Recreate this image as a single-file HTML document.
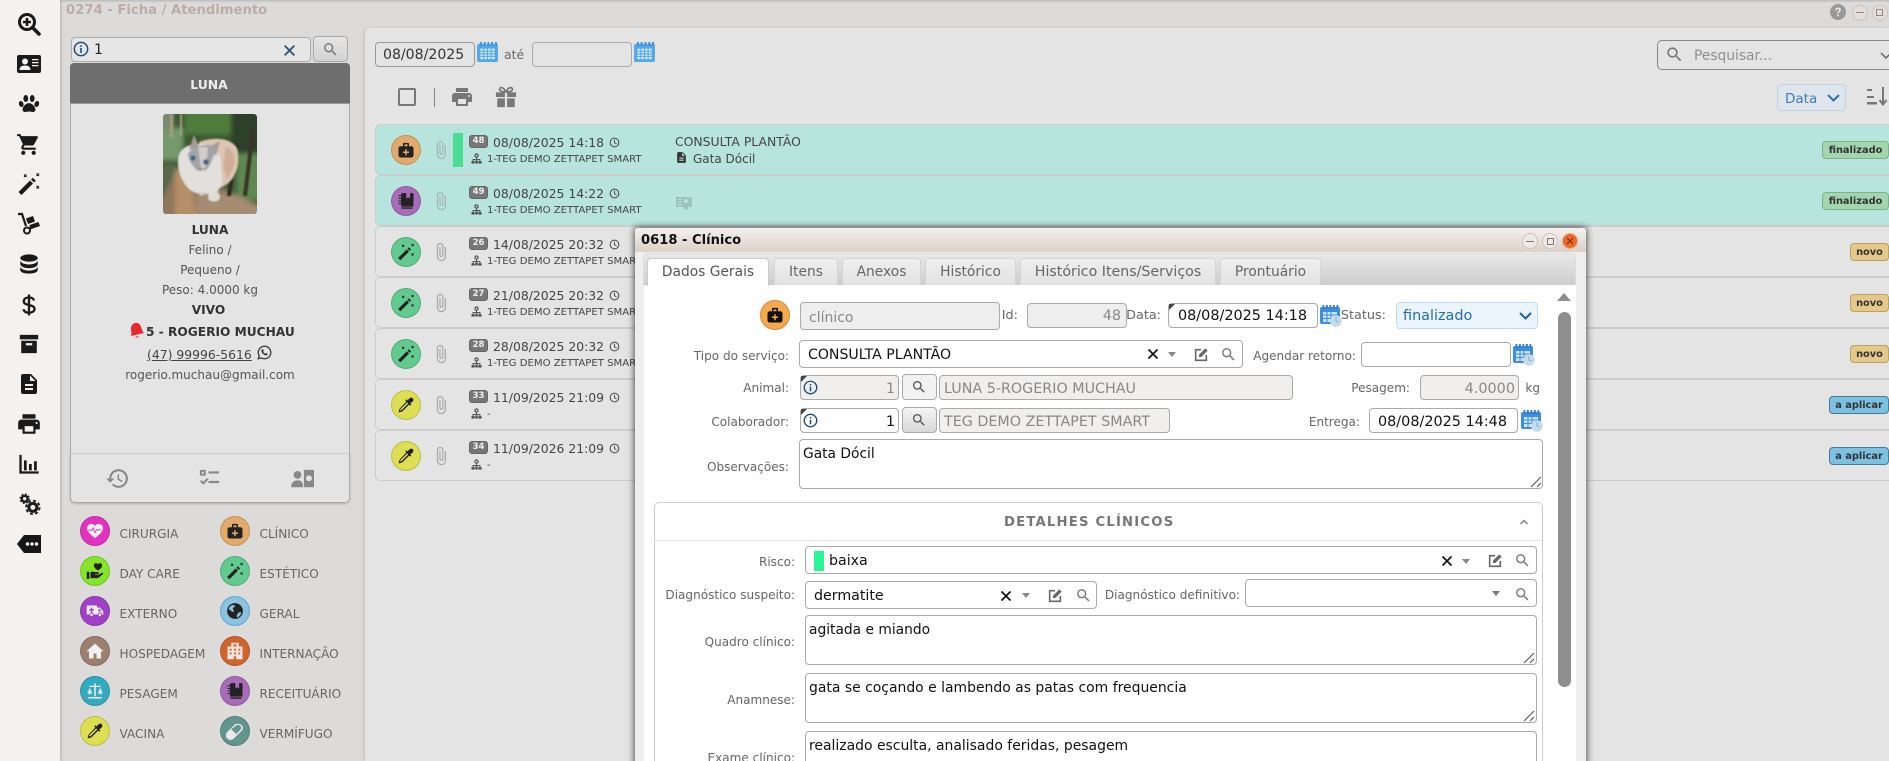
<!DOCTYPE html>
<html lang="pt"><head><meta charset="utf-8"><title>Ficha / Atendimento</title>
<style>
html{margin:0;padding:0;width:1889px;height:761px;overflow:hidden}
body{margin:0;padding:0;width:1889px;height:761px;overflow:hidden;position:relative;background:#dcdbd9;font-family:"DejaVu Sans","Liberation Sans",sans-serif;font-size:12.4px;color:#444}
div,span,svg{box-sizing:border-box}
.a{position:absolute}
.t{position:absolute;white-space:nowrap;height:16px;line-height:16px;margin-top:1px}
.r{text-align:right}
.i{position:absolute;display:block}
.in{position:absolute;background:#fff;border:1px solid #aaa;border-radius:4px}
.dis{background:#f0efee}
.lb{position:absolute;white-space:nowrap;height:16px;line-height:16px;text-align:right;color:#666;font-size:12.05px}
.v{position:absolute;white-space:nowrap;height:20px;line-height:20px;font-size:14.4px;color:#111;margin-top:1px}
.g{color:#888}
.c{position:absolute;width:30px;height:30px;border-radius:50%;border:1px solid rgba(0,0,0,.15)}
.c svg{position:absolute;left:5px;top:5px;width:18px;height:18px}
.leg{position:absolute;white-space:nowrap;height:16px;line-height:16px;font-size:12.1px;color:#666;margin-top:1px}
.row{position:absolute;left:375px;width:1520px;height:51px;background:#e4e4e4;border:1px solid #ccc;border-radius:5px}
.gr{background:#b7e4dd}
.bd{position:absolute;left:469px;width:19px;height:13px;background:#777;border:1px solid #666;border-radius:3px;color:#eee;font-weight:bold;font-size:8.5px;line-height:11px;text-align:center}
.tag{position:absolute;height:18px;border-radius:4px;line-height:18px;font-weight:bold;font-size:9.8px;color:#333;text-align:center;border:1px solid}
.fin{left:1822px;width:67px;background:#a3d6ae;border-color:#7fb28b}
.nov{left:1850px;width:39px;background:#e4c88c;border-color:#bda066}
.apl{left:1829px;width:60px;background:#7cc0e2;border-color:#4c7a90}
.tab{position:absolute;top:258px;height:27px;background:linear-gradient(#efefef,#e2e2e2);border:1px solid #d4d4d4;border-bottom:0;border-radius:4px 4px 0 0;color:#666;font-size:13.8px;line-height:26px;text-align:center}
.wb{position:absolute;width:16px;height:16px;border-radius:50%;border:1px solid #cbc4bd;background:#efeae6}
.corner{position:absolute;width:0;height:0;border-top:6px solid #444;border-right:6px solid transparent}
</style></head><body>
<svg width="0" height="0" style="position:absolute"><defs>
<symbol id="search" viewBox="0 0 24 24"><path d="M15.5 14h-.79l-.28-.27C15.41 12.59 16 11.11 16 9.5 16 5.91 13.09 3 9.5 3S3 5.91 3 9.5 5.91 16 9.5 16c1.61 0 3.09-.59 4.23-1.57l.27.28v.79l5 4.99L20.49 19l-4.99-5zm-6 0C7.01 14 5 11.99 5 9.5S7.01 5 9.5 5 14 7.01 14 9.5 11.99 14 9.5 14z"/></symbol>
<symbol id="splus" viewBox="0 0 24 24"><circle cx="10" cy="10" r="7.5" fill="none" stroke="currentColor" stroke-width="3"/><path d="M15.5 15.5 22 22" stroke="currentColor" stroke-width="3.6" stroke-linecap="round"/><path d="M10 6v8M6 10h8" stroke="currentColor" stroke-width="2.6"/></symbol>
<symbol id="idc" viewBox="0 0 24 18"><path fill-rule="evenodd" d="M2 0h20a2 2 0 0 1 2 2v14a2 2 0 0 1-2 2H2a2 2 0 0 1-2-2V2a2 2 0 0 1 2-2zM8 3.500a3 3 0 1 0 0 6 3 3 0 0 0 0-6zM2.500 15h11c0-3-2-4.500-5.500-4.500S2.500 12 2.500 15zM15 4v1.200h6.500V4zM15 7v1.200h6.500V7zM15 10v1.200h6.500V10z"/></symbol>
<symbol id="paw" viewBox="0 0 24 24"><ellipse cx="8.500" cy="6" rx="2.600" ry="3.800"/><ellipse cx="15.500" cy="6" rx="2.600" ry="3.800"/><ellipse cx="3.500" cy="12" rx="2.500" ry="3.300" transform="rotate(-20 3.500 12)"/><ellipse cx="20.500" cy="12" rx="2.500" ry="3.300" transform="rotate(20 20.500 12)"/><path d="M12 11c-3.500 0-7 4-7 7 0 3 3 3 4.500 2.500 1.500-.5 3.500-.5 5 0 1.500.5 4.500.5 4.500-2.500 0-3-3.500-7-7-7z"/></symbol>
<symbol id="cart" viewBox="0 0 24 24"><path d="M7 18c-1.100 0-1.990.9-1.990 2S5.900 22 7 22s2-.9 2-2-.9-2-2-2zM1 2v2h2l3.600 7.590-1.350 2.450c-.16.28-.25.61-.25.96 0 1.100.9 2 2 2h12v-2H7.420c-.14 0-.25-.11-.25-.25l.03-.12.9-1.630h7.450c.75 0 1.410-.41 1.750-1.030l3.580-6.490c.08-.14.12-.31.12-.48 0-.55-.45-1-1-1H5.210l-.94-2H1zm16 16c-1.100 0-1.990.9-1.990 2s.89 2 1.990 2 2-.9 2-2-.9-2-2-2z"/></symbol>
<symbol id="wand" viewBox="0 0 24 24"><path d="M1.500 20 13 8.500l3 3L4.500 23z"/><path d="M14 7.500 15.800 5.700l3 3L17 10.500z"/><path d="M7 2.500l2.500 2.500M9.500 2.500 7 5M19.500 14l2.500 2.500M22 14l-2.500 2.500M19.500 1.500 22 4M22 1.500 19.500 4" stroke="currentColor" stroke-width="1.200" fill="none"/></symbol>
<symbol id="dolly" viewBox="0 0 24 24"><path d="M1 2h4l4 12" fill="none" stroke="currentColor" stroke-width="2.200"/><circle cx="10" cy="18.500" r="3" fill="none" stroke="currentColor" stroke-width="2"/><path d="M9 6.500 16 4l2 5.500-7 2.500zM12.500 13l9-3 1.500 4-10 3.500z"/></symbol>
<symbol id="db" viewBox="0 0 24 24"><ellipse cx="12" cy="5.500" rx="9.500" ry="4"/><path d="M2.500 8.500c1 2.500 4.500 4 9.500 4s8.500-1.500 9.500-4v4c-1 2.500-4.500 4-9.500 4s-8.500-1.500-9.500-4z" /><path d="M2.500 15.200c1 2.500 4.500 4 9.500 4s8.500-1.500 9.500-4V19c-1 2.500-4.500 3.500-9.500 3.500S3.500 21.500 2.500 19z"/></symbol>
<symbol id="dollar" viewBox="0 0 24 24"><path d="M17 7.500C16.500 5.500 14.500 4.500 12 4.500c-3 0-5.200 1.300-5.200 3.700 0 5.300 10.700 2.500 10.700 7.800 0 2.300-2.300 3.700-5.500 3.700-2.800 0-5-1.200-5.500-3.500M12 1.500v21" fill="none" stroke="currentColor" stroke-width="2.300"/></symbol>
<symbol id="arch" viewBox="0 0 24 24"><path fill-rule="evenodd" d="M2 2h20v5H2zM3.500 8.500h17V22h-17zM8.500 11v2.500h7V11z"/></symbol>
<symbol id="doc" viewBox="0 0 24 24"><path d="M14 2H6c-1.100 0-1.990.9-1.990 2L4 20c0 1.100.89 2 1.990 2H18c1.100 0 2-.9 2-2V8l-6-6zm2 16H8v-2h8v2zm0-4H8v-2h8v2zm-3-5V3.500L18.500 9H13z"/></symbol>
<symbol id="print" viewBox="0 0 24 24"><path d="M19 8H5c-1.660 0-3 1.340-3 3v6h4v4h12v-4h4v-6c0-1.660-1.340-3-3-3zm-3 11H8v-5h8v5zm3-7c-.55 0-1-.45-1-1s.45-1 1-1 1 .45 1 1-.45 1-1 1zm-1-9H6v4h12V3z"/></symbol>
<symbol id="chart" viewBox="0 0 24 24"><path d="M1.500 2h2.500v18h-2.500zM1.500 20h21v2.500h-21zM6.500 8h3v11h-3zM12 12h3v7h-3zM17.500 9h3v10h-3z"/></symbol>
<symbol id="cogs" viewBox="0 0 24 24"><circle cx="7" cy="6" r="3" fill="none" stroke="currentColor" stroke-width="2.400"/><circle cx="7" cy="6" r="4.700" fill="none" stroke="currentColor" stroke-width="1.500" stroke-dasharray="2 1.700"/><circle cx="15.500" cy="15" r="4.200" fill="none" stroke="currentColor" stroke-width="3.200"/><circle cx="15.500" cy="15" r="7" fill="none" stroke="currentColor" stroke-width="2" stroke-dasharray="3 2.500"/></symbol>
<symbol id="history" viewBox="0 0 24 24"><path d="M13 3c-4.970 0-9 4.030-9 9H1l3.890 3.890.07.14L9 12H6c0-3.870 3.130-7 7-7s7 3.130 7 7-3.130 7-7 7c-1.930 0-3.680-.79-4.940-2.060l-1.420 1.420C8.270 19.990 10.510 21 13 21c4.970 0 9-4.030 9-9s-4.030-9-9-9zm-1 5v5l4.280 2.540.72-1.210-3.500-2.080V8H12z"/></symbol>
<symbol id="chk" viewBox="0 0 24 24"><path d="M2 3h6v6H2zM4 5v2h2V5zM11 4.500h11v2.300H11zM11 14.500h11v2.300H11zM2 15l1.500-1.500 2 2 4-4L11 13l-5.500 5.500z"/></symbol>
<symbol id="pcash" viewBox="0 0 26 24"><circle cx="7" cy="7.500" r="4.200"/><path d="M0 21c0-5 3-7.500 7-7.500s6 1.500 6 7.500z"/><path fill-rule="evenodd" d="M14 2h11v19H14zM19.500 8a3 3 0 1 0 0 6.500 3 3 0 0 0 0-6.500z"/></symbol>
<symbol id="med" viewBox="0 0 24 24"><path fill-rule="evenodd" d="M9 2.500h6a1 1 0 0 1 1 1V7h3a3 3 0 0 1 3 3v9a3 3 0 0 1-3 3H5a3 3 0 0 1-3-3v-9a3 3 0 0 1 3-3h3V3.500a1 1 0 0 1 1-1zM10 4.500V7h4V4.500zM11 11v3H8v2h3v3h2v-3h3v-2h-3v-3z"/></symbol>
<symbol id="heart" viewBox="0 0 24 24"><path d="M12 21.500C5 16 1.500 12.500 1.500 8.200 1.500 5 4 2.500 7 2.500c2 0 3.800 1 5 2.800 1.200-1.800 3-2.800 5-2.800 3 0 5.500 2.500 5.500 5.700 0 4.300-3.500 7.800-10.500 13.300z"/><path d="M3 11h5l1.500-3 2.500 6 2-3.500h6" fill="none" stroke="#e332c0" stroke-width="1.300"/></symbol>
<symbol id="hand" viewBox="0 0 24 24"><path d="M16 11.500c-3-2.300-5.500-4-5.500-7C10.500 2.800 11.800 1.500 13.300 1.500c1.100 0 2.100.6 2.700 1.600.6-1 1.600-1.600 2.700-1.600 1.500 0 2.800 1.300 2.800 3 0 3-2.500 4.700-5.500 7z"/><path d="M1 13h3.500v9.500H1zM6 13.500c2-1 4-1 6 0h4c1.500 0 1.500 2.500 0 2.500h-4v.8h5l4-2.300c1.500-.6 2.500 1 1.300 2L16 21.500H6z"/></symbol>
<symbol id="amb" viewBox="0 0 26 24"><path fill-rule="evenodd" d="M2 4h13a1 1 0 0 1 1 1v2h4l5 5.500V17h-2a3 3 0 0 0-6 0h-6a3 3 0 0 0-6 0H2a1 1 0 0 1-1-1V5a1 1 0 0 1 1-1zM7 7v2.500H4.500v2H7V14h2v-2.500h2.500v-2H9V7zM18 9v3.500h4.500L19.500 9z"/><circle cx="8" cy="17.500" r="2"/><circle cx="20" cy="17.500" r="2"/></symbol>
<symbol id="globe" viewBox="0 0 24 24"><path d="M12 1.500a10.500 10.500 0 1 0 0 21 10.500 10.500 0 0 0 0-21zM5 6.500c1-1.200 2.500-2 4-2.500 1.500.3 3.500.5 3 2-.5 1.300-2.500.8-2.800 2.500-.3 1.600 1.500 2 1.300 3.800-.2 1.500-2.500 1-3.500-.3-1-1.300-2-1.500-3.500-2 .2-1.300.8-2.500 1.500-3.500zm10 14c-1-.8-1-2.500 0-4 1-1.300 1.700-3 4-3 .8 0 1.200.3 1.400.5-.3 2.700-2.500 5.500-5.400 6.500z"/></symbol>
<symbol id="house" viewBox="0 0 24 24"><path d="M12 2 0.500 12.500H4V22h6v-6.500h4V22h6v-9.500h3.500z"/></symbol>
<symbol id="hosp" viewBox="0 0 24 24"><path fill-rule="evenodd" d="M7 1h10v5h5v17H2V6h5zM10 2.500v4h1.300V5.200h1.400v1.300H14v-4h-1.300v1.400h-1.400V2.500zM5 9v2.500h2.500V9zM10.700 9v2.500h2.600V9zM16.500 9v2.500H19V9zM5 14v2.500h2.500V14zM10.700 14v2.500h2.600V14zM16.500 14v2.500H19V14zM10.500 19v4h3v-4z"/></symbol>
<symbol id="scale" viewBox="0 0 24 24"><path d="M11 2h2v3h6.500v1.700H13V19h-2V6.700H4.500V5H11zM3 22v-2h18v2z"/><path d="M5 7.500 2 14c0 1.500 1.500 2.300 3 2.300S8 15.500 8 14zM19 7.500 16 14c0 1.500 1.500 2.300 3 2.300s3-.8 3-2.300z" fill-opacity=".85"/></symbol>
<symbol id="note" viewBox="0 0 24 24"><path fill-rule="evenodd" d="M7 1.500h11l2.500 0c1 0 1.500.5 1.500 1.500v15c0 1-.5 1.500-1.500 1.500H7c-1 0-1.500-.5-1.500-1.500V3c0-1 .5-1.500 1.500-1.500zM12.500 1.500v7.500l2.500-2 2.500 2V1.500z"/><path d="M2 5h5M2 8.500h5M2 12h5M2 15.500h5" stroke="currentColor" stroke-width="1.400"/><path d="M5.500 20.500h15v1.800h-14c-1 0-1-1.800-1-1.800z"/></symbol>
<symbol id="drop" viewBox="0 0 24 24"><path d="M21 3a3 3 0 0 0-4.200 0l-2.800 2.800-1.500-1.500-1.500 1.500 1.500 1.500L3.500 16.800 2 22l5.200-1.500 9-9 1.500 1.500 1.500-1.500-1.500-1.500L21 7.200A3 3 0 0 0 21 3zM6.200 18.800l-2.200.7.700-2.200 8.800-8.800 1.500 1.500z"/></symbol>
<symbol id="pill" viewBox="0 0 24 24"><path fill-rule="evenodd" d="M15 3a6 6 0 0 1 8.500 6l-1 2-11 11a6 6 0 0 1-9-8.500L14 2zM8 9.500 14.500 16l6-6A4 4 0 0 0 15 4.500z" transform="translate(-1 0)"/></symbol>
<symbol id="clip" viewBox="0 0 24 24"><path d="M16.500 6v11.500c0 2.210-1.790 4-4 4s-4-1.790-4-4V5c0-1.380 1.120-2.500 2.500-2.500s2.500 1.120 2.500 2.500v10.500c0 .55-.45 1-1 1s-1-.45-1-1V6H10v9.500c0 1.380 1.120 2.500 2.500 2.500s2.500-1.120 2.500-2.500V5c0-2.210-1.790-4-4-4S7 2.790 7 5v12.500c0 3.040 2.460 5.500 5.500 5.500s5.500-2.460 5.500-5.500V6h-1.500z"/></symbol>
<symbol id="clock" viewBox="0 0 24 24"><circle cx="12" cy="12" r="9.500" fill="none" stroke="currentColor" stroke-width="2.200"/><path d="M12 6v6.500l4.500 2.500" fill="none" stroke="currentColor" stroke-width="2"/></symbol>
<symbol id="tree" viewBox="0 0 24 24"><circle cx="12" cy="5.500" r="3.500" fill="none" stroke="currentColor" stroke-width="2.400"/><path d="M12 9v5M4.500 18v-4h15v4" fill="none" stroke="currentColor" stroke-width="2"/><path d="M1 18h7v5H1zM16 18h7v5h-7zM9.500 16h5v7h-5z"/></symbol>
<symbol id="info" viewBox="0 0 24 24"><circle cx="12" cy="12" r="10" fill="none" stroke="#1d4f7e" stroke-width="2.200"/><path d="M10.800 6.300h2.400v2.500h-2.400zM10.800 10.500h2.400v7.500h-2.400z" fill="#1d4f7e"/></symbol>
<symbol id="gift" viewBox="0 0 24 24"><path fill-rule="evenodd" d="M1 7h22v5H1zM2.500 13.500h8.300V23H2.500zM13.200 13.500h8.300V23h-8.300zM10.800 7h2.400v5h-2.400z"/><path d="M12 6.500C9.500 1 5.500 0.500 5 3.500 4.600 6 9 6.500 12 6.500zm0 0c2.500-5.500 6.500-6 7-3 .4 2.500-4 3-7 3z" fill="none" stroke="currentColor" stroke-width="1.800"/></symbol>
<symbol id="cal" viewBox="0 0 22 21"><rect x="0" y="2" width="22" height="19" rx="2" fill="#55a8e6"/><path d="M3 0h2v4H3zM7 0h2v4H7zM11 0h2v4h-2zM15 0h2v4h-2zM19 0h2v4h-2z" fill="#3f8fd0"/><path d="M3.500 7h15v11h-15z" fill="#d4e9f9"/><path d="M3.500 9.700h15M3.500 12.400h15M3.500 15.100h15M7.200 7v11M11 7v11M14.800 7v11" stroke="#55a8e6" stroke-width="1.100"/></symbol>
<symbol id="calc" viewBox="0 0 22 22"><rect x="0" y="2" width="20" height="17" rx="2" fill="#3b8fe2"/><path d="M2.500 0h1.800v4H2.500zM6 0h1.800v4H6zM9.500 0h1.800v4H9.500zM13 0h1.800v4H13zM16.500 0h1.800v4H16.500z" fill="#2f7cc8"/><path d="M3 7h14v10H3z" fill="#cfe4f8"/><path d="M3 10h14M3 13.500h14M7 7v10M11 7v10" stroke="#3b8fe2" stroke-width="1.100"/><circle cx="16" cy="16" r="5.800" fill="#c6dcec"/><path d="M16 12.500V16l2.500 1" fill="none" stroke="#7eb0d4" stroke-width="1"/></symbol>
<symbol id="edit" viewBox="0 0 24 24"><path d="M12 4H4v16h16v-8" fill="none" stroke="currentColor" stroke-width="2.400"/><path d="M9 15v-3.500L18.500 2 22 5.500 12.500 15z"/></symbol>
<symbol id="x" viewBox="0 0 12 12"><path d="M1.500 1.500 10.500 10.500M10.500 1.500 1.500 10.500" stroke="currentColor" stroke-width="1.700" fill="none"/></symbol>
<symbol id="res" viewBox="0 0 12 12"><path d="M1 11 11 1M7 11l4-4" stroke="#555" stroke-width="1.100" fill="none"/></symbol>
</defs></svg>

<!-- top -->
<div class="a" style="left:0;top:0;width:1889px;height:3px;background:linear-gradient(#bdbcbb,#dcdbd9)"></div>
<div class="a" style="left:0;top:0;width:60px;height:761px;background:#f4f1ee;box-shadow:1px 0 3px rgba(0,0,0,.2)"></div>
<svg class="i" style="left:17px;top:12px;width:24px;height:24px;color:#1a1a1a"><use href="#splus"/></svg>
<svg class="i" style="left:17px;top:55px;width:24px;height:18px;color:#1a1a1a" fill="#1a1a1a"><use href="#idc"/></svg>
<svg class="i" style="left:18px;top:93px;width:22px;height:22px;color:#1a1a1a" fill="#1a1a1a"><use href="#paw"/></svg>
<svg class="i" style="left:16px;top:132px;width:25px;height:25px;color:#1a1a1a" fill="#1a1a1a"><use href="#cart"/></svg>
<svg class="i" style="left:17px;top:172px;width:24px;height:24px;color:#1a1a1a" fill="#1a1a1a"><use href="#wand"/></svg>
<svg class="i" style="left:17px;top:212px;width:24px;height:24px;color:#1a1a1a" fill="#1a1a1a"><use href="#dolly"/></svg>
<svg class="i" style="left:18px;top:253px;width:22px;height:22px;color:#1a1a1a" fill="#1a1a1a"><use href="#db"/></svg>
<svg class="i" style="left:17px;top:293px;width:24px;height:24px;color:#1a1a1a"><use href="#dollar"/></svg>
<svg class="i" style="left:18px;top:333px;width:22px;height:22px;color:#1a1a1a" fill="#1a1a1a"><use href="#arch"/></svg>
<svg class="i" style="left:16px;top:372px;width:26px;height:24px;color:#1a1a1a" fill="#1a1a1a"><use href="#doc"/></svg>
<svg class="i" style="left:16px;top:411px;width:26px;height:26px;color:#1a1a1a" fill="#1a1a1a"><use href="#print"/></svg>
<svg class="i" style="left:18px;top:453px;width:22px;height:22px;color:#1a1a1a" fill="#1a1a1a"><use href="#chart"/></svg>
<svg class="i" style="left:18px;top:493px;width:23px;height:23px;color:#1a1a1a"><use href="#cogs"/></svg>
<svg class="i" style="left:17px;top:535px;width:24px;height:18px" viewBox="0 0 24 18"><path d="M7 0h17v18H7L0 9z" fill="#161616"/><circle cx="10.500" cy="9" r="1.700" fill="#eee"/><circle cx="15" cy="9" r="1.700" fill="#eee"/><circle cx="19.500" cy="9" r="1.700" fill="#eee"/></svg>

<div class="t" style="left:66px;top:2px;font-weight:bold;font-size:13.200px;color:#bcaca7">0274 - Ficha / Atendimento</div>

<!-- animal search -->
<div class="in" style="left:71px;top:37px;width:240px;height:25px;background:#e6e6e6"></div>
<svg class="i" style="left:73px;top:41px;width:16px;height:16px"><use href="#info"/></svg>
<div class="t" style="left:94px;top:41px;font-size:14px;color:#222">1</div>
<svg class="i" style="left:283px;top:44px;width:13px;height:13px;color:#2a5376"><use href="#x" style="stroke-width:3"/></svg>
<div class="a" style="left:313px;top:36px;width:35px;height:26px;background:linear-gradient(#e6e6e6,#d2d2d2);border:1px solid #aaa;border-radius:4px"></div>
<svg class="i" style="left:322px;top:41px;width:17px;height:17px" fill="#777"><use href="#search"/></svg>

<!-- card -->
<div class="a" style="left:70px;top:63px;width:280px;height:41px;background:#6e6e6e;border-radius:4px 4px 0 0"></div>
<div class="t" style="left:70px;top:76px;width:278px;text-align:center;color:#eee;font-weight:bold;font-size:12.400px">LUNA</div>
<div class="a" style="left:70px;top:103px;width:280px;height:351px;background:#e4e4e4;border:1px solid #aaa;border-top:1px solid #999"></div>
<div class="a" style="left:70px;top:453px;width:280px;height:50px;background:#e4e4e4;border:1px solid #aaa;border-top:1px solid #ccc;border-radius:0 0 5px 5px;box-shadow:0 1px 2px rgba(0,0,0,.2)"></div>
<svg class="a" style="left:163px;top:114px;width:94px;height:100px;border-radius:3px" viewBox="0 0 94 100">
<defs><filter id="bl" x="-10%" y="-10%" width="120%" height="120%"><feGaussianBlur stdDeviation="2"/></filter><filter id="bs" x="-10%" y="-10%" width="120%" height="120%"><feGaussianBlur stdDeviation=".8"/></filter><clipPath id="ph"><rect width="94" height="100" rx="3"/></clipPath></defs>
<g clip-path="url(#ph)"><rect width="94" height="100" fill="#46603a"/><g filter="url(#bl)">
<path d="M-6-6h106v60H-6z" fill="#3e5a33"/><path d="M22-6h48v26H22z" fill="#4f7c3e"/><path d="M68-6h32v44H68z" fill="#2f3f2b"/><path d="M-6 14h26v32H-6z" fill="#74996c"/><path d="M-6-6h16v22H-6z" fill="#7a8a6e"/><path d="M74 40h24v46H74z" fill="#5f8750"/><path d="M-6 50h20v56H-6z" fill="#59674a"/>
<path d="M-6 96 14 54l32 14 52 24v14H-6z" fill="#8f775c"/><path d="M12 56l14-2 8 50H12z" fill="#b48f68"/><path d="M34 80l36 0 28 14v10H34z" fill="#a58c72"/></g>
<g filter="url(#bs)"><path d="M70 30l6 0-8 52-4 0z" fill="#2c2b22"/><path d="M88 16l4 0-8 66-4 0z" fill="#3a3326"/><path d="M7 0h3v24H7zM17 0h2v22h-2z" fill="#a39c80"/>
<path d="M36 28C52 22 72 24 75 38c2 16-4 30-18 36L40 60z" fill="#dcc5b2"/><path d="M63 33c7 2 10 10 8 20l-7 12-4-12z" fill="#cfae98"/>
<path d="M15 48c0-14 10-18 22-18 10 0 21 6 21 18 0 14 4 20-2 27-8 8-24 7-31-1-7-8-10-16-10-26z" fill="#e2dfdc"/>
<path d="M30 76c6 4 18 4 26-1l-2 7-5 2-5-4-6 2z" fill="#cfc9c3"/><path d="M46 77c4-1 11 0 11 6s-11 6-12 1z" fill="#e0dcd6"/>
<path d="M26 36l5-15 5 12zM57 27l-4 15-9-8z" fill="#a59c96"/><path d="M25 40c4-7 15-11 28-8-2 10-5 19-10 24l-8 1c-5-4-10-11-10-17z" fill="#a3a3a8"/><path d="M35 33l3 22 5-2 2-20z" fill="#d0ccc9"/>
<circle cx="30" cy="44" r="2.600" fill="#3f6580"/><circle cx="43" cy="48" r="2.800" fill="#3f6580"/><path d="M35 54l4 0-2 3z" fill="#a67f74"/></g></g></svg>
<div class="t" style="left:70px;top:221px;width:280px;text-align:center;font-weight:bold;font-size:12.200px;color:#333">LUNA</div>
<div class="t" style="left:70px;top:241px;width:280px;text-align:center;color:#555;font-size:12px">Felino /</div>
<div class="t" style="left:70px;top:261px;width:280px;text-align:center;color:#555;font-size:12px">Pequeno /</div>
<div class="t" style="left:70px;top:281px;width:280px;text-align:center;color:#555;font-size:12px">Peso: 4.0000 kg</div>
<div class="t" style="left:70px;top:301px;width:277px;text-align:center;font-weight:bold;font-size:12.200px;color:#333">VIVO</div>
<svg class="i" style="left:129px;top:322px;width:15px;height:16px" viewBox="0 0 15 16"><path d="M6 1c3-1 5 1 6 4 1 2 1 4 3 6l-13 3c1-3 0-5 0-7 0-3 1-5 4-6zM6 15c1 1 3 1 4-1z" fill="#e8282c"/></svg>
<div class="t" style="left:146px;top:323px;font-weight:bold;font-size:12.200px;color:#333">5 - ROGERIO MUCHAU</div>
<div class="t" style="left:147px;top:346px;color:#444;text-decoration:underline">(47) 99996-5616 </div>
<svg class="i" style="left:257px;top:345px;width:15px;height:15px" viewBox="0 0 24 24"><path d="M12 2a10 10 0 0 0-8.500 15.200L2 22l5-1.400A10 10 0 1 0 12 2z" fill="none" stroke="#333" stroke-width="2"/><path d="M8 7c-1 1-1.500 2.500 0 5 1.500 2.500 4 4.500 6.500 4.500 1.500 0 2.500-1 2.500-2.500l-2.500-1.300-1.200 1.200c-1.500-.5-2.800-2-3.300-3.300L11 9.500 9.700 7z" fill="#333"/></svg>
<div class="t" style="left:70px;top:366px;width:280px;text-align:center;color:#555;font-size:12px">rogerio.muchau@gmail.com</div>
<svg class="i" style="left:105px;top:466px;width:25px;height:25px" fill="#888"><use href="#history"/></svg>
<svg class="i" style="left:198px;top:467px;width:23px;height:23px" fill="#888"><use href="#chk"/></svg>
<svg class="i" style="left:290px;top:468px;width:26px;height:22px" fill="#888"><use href="#pcash"/></svg>

<!-- legend -->
<div class="c" style="left:80px;top:516px;background:#e332c0"><svg fill="#f3f3f3"><use href="#heart"/></svg></div><div class="leg" style="left:119.500px;top:525px">CIRURGIA</div>
<div class="c" style="left:220px;top:516px;background:#e2ab6c"><svg fill="#222"><use href="#med"/></svg></div><div class="leg" style="left:259.500px;top:525px">CLÍNICO</div>
<div class="c" style="left:80px;top:556px;background:#86e52a"><svg fill="#222"><use href="#hand"/></svg></div><div class="leg" style="left:119.500px;top:565px">DAY CARE</div>
<div class="c" style="left:220px;top:556px;background:#62c98f"><svg fill="#222" style="color:#222"><use href="#wand"/></svg></div><div class="leg" style="left:259.500px;top:565px">ESTÉTICO</div>
<div class="c" style="left:80px;top:596px;background:#a040c8"><svg fill="#f0f0f0"><use href="#amb"/></svg></div><div class="leg" style="left:119.500px;top:605px">EXTERNO</div>
<div class="c" style="left:220px;top:596px;background:#8cc2e0;border-color:#5ba5d4"><svg fill="#222"><use href="#globe"/></svg></div><div class="leg" style="left:259.500px;top:605px">GERAL</div>
<div class="c" style="left:80px;top:636px;background:#9c7f6e"><svg fill="#f0f0f0"><use href="#house"/></svg></div><div class="leg" style="left:119.500px;top:645px">HOSPEDAGEM</div>
<div class="c" style="left:220px;top:636px;background:#d0642f"><svg fill="#f0e4dc"><use href="#hosp"/></svg></div><div class="leg" style="left:259.500px;top:645px">INTERNAÇÃO</div>
<div class="c" style="left:80px;top:676px;background:#35a9c0"><svg fill="#eef"><use href="#scale"/></svg></div><div class="leg" style="left:119.500px;top:685px">PESAGEM</div>
<div class="c" style="left:220px;top:676px;background:#a86cb8"><svg fill="#222" style="color:#222"><use href="#note"/></svg></div><div class="leg" style="left:259.500px;top:685px">RECEITUÁRIO</div>
<div class="c" style="left:80px;top:716px;background:#dede55"><svg fill="#222"><use href="#drop"/></svg></div><div class="leg" style="left:119.500px;top:725px">VACINA</div>
<div class="c" style="left:220px;top:716px;background:#62958f"><svg fill="#e8e8e8"><use href="#pill"/></svg></div><div class="leg" style="left:259.500px;top:725px">VERMÍFUGO</div>

<!-- right panel -->
<div class="a" style="left:365px;top:28px;width:1524px;height:733px;background:#e4e4e4;border-radius:5px 0 0 0;box-shadow:-1px 0 3px rgba(0,0,0,.12)"></div>
<div class="a" style="left:375px;top:42px;width:100px;height:25px;border:1px solid #999;border-radius:4px"></div>
<div class="t" style="left:383px;top:46px;font-size:14.100px;color:#333">08/08/2025</div>
<svg class="i" style="left:477px;top:42px;width:21px;height:20px"><use href="#cal"/></svg>
<div class="t" style="left:504px;top:46px;color:#666;font-size:12.400px">até</div>
<div class="a" style="left:532px;top:42px;width:100px;height:25px;border:1px solid #aaa;border-radius:4px"></div>
<svg class="i" style="left:634px;top:42px;width:21px;height:20px"><use href="#cal"/></svg>
<div class="a" style="left:398px;top:88px;width:18px;height:18px;border:2px solid #777;border-radius:2px"></div>
<div class="a" style="left:434px;top:88px;width:1px;height:19px;background:#888"></div>
<svg class="i" style="left:450px;top:85px;width:24px;height:24px" fill="#777"><use href="#print"/></svg>
<svg class="i" style="left:495px;top:86px;width:22px;height:22px;color:#777" fill="#777"><use href="#gift"/></svg>
<div class="a" style="left:1657px;top:40px;width:240px;height:30px;border:1px solid #888;border-radius:5px"></div>
<svg class="i" style="left:1665px;top:45px;width:19px;height:19px" fill="#777"><use href="#search"/></svg>
<div class="t" style="left:1694px;top:47px;font-size:13.800px;color:#8f8f8f">Pesquisar...</div>
<svg class="i" style="left:1880px;top:51px;width:9px;height:8px" viewBox="0 0 9 8"><path d="M1 2l5 5 5-5" fill="none" stroke="#666" stroke-width="1.500"/></svg>
<div class="a" style="left:1777px;top:84px;width:69px;height:27px;background:#dfe5ec;border:1px solid #c3d3e0;border-radius:4px"></div>
<div class="t" style="left:1785px;top:90px;font-size:13.500px;color:#3f7cbd">Data</div>
<svg class="i" style="left:1827px;top:94px;width:13px;height:8px" viewBox="0 0 13 8"><path d="M1 1l5.500 5.500L12 1" fill="none" stroke="#2b70b5" stroke-width="2"/></svg>
<svg class="i" style="left:1867px;top:87px;width:22px;height:19px" viewBox="0 0 22 19"><path d="M0 2h5v2H0zM0 9h7v2H0zM0 15h10v2.500H0z" fill="#777"/><path d="M16 0v16M12.500 13l3.500 4.500 3.500-4.500" fill="none" stroke="#777" stroke-width="2"/></svg>
<svg class="i" style="left:1830px;top:4px;width:16px;height:16px" viewBox="0 0 16 16"><circle cx="8" cy="8" r="8" fill="#999"/><path d="M5.200 6.200c0-1.600 1.200-2.600 2.900-2.600 1.600 0 2.800.9 2.800 2.300 0 1.900-2.200 1.900-2.200 3.600H7.200c0-2.400 2-2.400 2-3.500 0-.6-.5-1-1.200-1-.8 0-1.200.5-1.300 1.200zM7.200 10.500h1.600V12.300H7.200z" fill="#eee"/></svg>
<div class="wb" style="left:1852px;top:5px;background:#e6dfd9"></div><div class="a" style="left:1856px;top:12px;width:8px;height:1px;background:#888"></div>
<div class="wb" style="left:1872px;top:5px;background:#e6dfd9"></div><div class="a" style="left:1876px;top:9px;width:7px;height:7px;border:1px solid #888"></div>

<!-- rows -->
<div class="row gr" style="top:124px"></div>
<div class="row gr" style="top:175px"></div>
<div class="row" style="top:226px"></div>
<div class="row" style="top:277px"></div>
<div class="row" style="top:328px"></div>
<div class="row" style="top:379px"></div>
<div class="row" style="top:430px"></div>
<div class="a" style="left:453px;top:133px;width:10px;height:34px;background:#4ade94"></div>

<div class="c" style="left:391px;top:135px;background:#e2ab6c"><svg fill="#222"><use href="#med"/></svg></div>
<div class="c" style="left:391px;top:186px;background:#a86cb8"><svg fill="#222" style="color:#222"><use href="#note"/></svg></div>
<div class="c" style="left:391px;top:237px;background:#62c98f"><svg fill="#222" style="color:#222"><use href="#wand"/></svg></div>
<div class="c" style="left:391px;top:288px;background:#62c98f"><svg fill="#222" style="color:#222"><use href="#wand"/></svg></div>
<div class="c" style="left:391px;top:339px;background:#62c98f"><svg fill="#222" style="color:#222"><use href="#wand"/></svg></div>
<div class="c" style="left:391px;top:390px;background:#dede55"><svg fill="#222"><use href="#drop"/></svg></div>
<div class="c" style="left:391px;top:441px;background:#dede55"><svg fill="#222"><use href="#drop"/></svg></div>

<svg class="i" style="left:431px;top:140px;width:20px;height:20px" fill="#a5b5b2"><use href="#clip"/></svg>
<svg class="i" style="left:431px;top:191px;width:20px;height:20px" fill="#a5b5b2"><use href="#clip"/></svg>
<svg class="i" style="left:431px;top:242px;width:20px;height:20px" fill="#aaa"><use href="#clip"/></svg>
<svg class="i" style="left:431px;top:293px;width:20px;height:20px" fill="#aaa"><use href="#clip"/></svg>
<svg class="i" style="left:431px;top:344px;width:20px;height:20px" fill="#aaa"><use href="#clip"/></svg>
<svg class="i" style="left:431px;top:395px;width:20px;height:20px" fill="#aaa"><use href="#clip"/></svg>
<svg class="i" style="left:431px;top:446px;width:20px;height:20px" fill="#aaa"><use href="#clip"/></svg>

<div class="bd" style="top:135px">48</div><div class="t" style="left:493px;top:134px">08/08/2025 14:18</div><svg class="i" style="left:609px;top:137px;width:11px;height:11px;color:#444"><use href="#clock"/></svg>
<svg class="i" style="left:471px;top:152px;width:11px;height:13px;color:#444" fill="#444"><use href="#tree"/></svg><div class="t" style="left:487px;top:151px;font-size:10.100px">1-TEG DEMO ZETTAPET SMART</div>
<div class="bd" style="top:186px">49</div><div class="t" style="left:493px;top:185px">08/08/2025 14:22</div><svg class="i" style="left:609px;top:188px;width:11px;height:11px;color:#444"><use href="#clock"/></svg>
<svg class="i" style="left:471px;top:203px;width:11px;height:13px;color:#444" fill="#444"><use href="#tree"/></svg><div class="t" style="left:487px;top:202px;font-size:10.100px">1-TEG DEMO ZETTAPET SMART</div>
<div class="bd" style="top:237px">26</div><div class="t" style="left:493px;top:236px">14/08/2025 20:32</div><svg class="i" style="left:609px;top:239px;width:11px;height:11px;color:#444"><use href="#clock"/></svg>
<svg class="i" style="left:471px;top:254px;width:11px;height:13px;color:#444" fill="#444"><use href="#tree"/></svg><div class="t" style="left:487px;top:253px;font-size:10.100px">1-TEG DEMO ZETTAPET SMART</div>
<div class="bd" style="top:288px">27</div><div class="t" style="left:493px;top:287px">21/08/2025 20:32</div><svg class="i" style="left:609px;top:290px;width:11px;height:11px;color:#444"><use href="#clock"/></svg>
<svg class="i" style="left:471px;top:305px;width:11px;height:13px;color:#444" fill="#444"><use href="#tree"/></svg><div class="t" style="left:487px;top:304px;font-size:10.100px">1-TEG DEMO ZETTAPET SMART</div>
<div class="bd" style="top:339px">28</div><div class="t" style="left:493px;top:338px">28/08/2025 20:32</div><svg class="i" style="left:609px;top:341px;width:11px;height:11px;color:#444"><use href="#clock"/></svg>
<svg class="i" style="left:471px;top:356px;width:11px;height:13px;color:#444" fill="#444"><use href="#tree"/></svg><div class="t" style="left:487px;top:355px;font-size:10.100px">1-TEG DEMO ZETTAPET SMART</div>
<div class="bd" style="top:390px">33</div><div class="t" style="left:493px;top:389px">11/09/2025 21:09</div><svg class="i" style="left:609px;top:392px;width:11px;height:11px;color:#444"><use href="#clock"/></svg>
<svg class="i" style="left:471px;top:407px;width:11px;height:13px;color:#444" fill="#444"><use href="#tree"/></svg><div class="t" style="left:487px;top:406px;font-size:10.100px">-</div>
<div class="bd" style="top:441px">34</div><div class="t" style="left:493px;top:440px">11/09/2026 21:09</div><svg class="i" style="left:609px;top:443px;width:11px;height:11px;color:#444"><use href="#clock"/></svg>
<svg class="i" style="left:471px;top:458px;width:11px;height:13px;color:#444" fill="#444"><use href="#tree"/></svg><div class="t" style="left:487px;top:457px;font-size:10.100px">-</div>

<div class="t" style="left:675px;top:133px;font-size:12.400px">CONSULTA PLANTÃO</div>
<svg class="i" style="left:675px;top:151px;width:13px;height:13px" fill="#333"><use href="#doc"/></svg>
<div class="t" style="left:693px;top:150px;font-size:12px">Gata Dócil</div>
<svg class="i" style="left:676px;top:196px;width:16px;height:15px" viewBox="0 0 16 15"><path d="M0 1h16v10h-4v3l-2-1-2 1v-3H0zM2 3v1h4V3zM2 5.500v1h4v-1zM2 8v1h4V8zM10 3a2 2 0 1 0 0 4 2 2 0 0 0 0-4z" fill="#9ec2bc" fill-rule="evenodd"/></svg>

<div class="tag fin" style="top:141px">finalizado</div>
<div class="tag fin" style="top:192px">finalizado</div>
<div class="tag nov" style="top:243px">novo</div>
<div class="tag nov" style="top:294px">novo</div>
<div class="tag nov" style="top:345px">novo</div>
<div class="tag apl" style="top:396px">a aplicar</div>
<div class="tag apl" style="top:447px">a aplicar</div>

<!-- modal -->
<div class="a" style="left:635px;top:228px;width:951px;height:540px;background:#eeeeee;box-shadow:0 0 7px 1px rgba(0,0,0,.65);border-radius:3px 3px 0 0"></div>
<div class="a" style="left:635px;top:228px;width:951px;height:24px;background:linear-gradient(#f5f1ee,#dbd0c7);border-radius:3px 3px 0 0"></div>
<div class="t" style="left:641px;top:232px;font-weight:bold;font-size:13.100px;color:#111">0618 - Clínico</div>
<div class="wb" style="left:1522px;top:233px"></div><div class="a" style="left:1526px;top:241px;width:8px;height:1px;background:#777"></div>
<div class="wb" style="left:1542px;top:233px"></div><div class="a" style="left:1547px;top:238px;width:7px;height:7px;border:1px solid #777"></div>
<div class="wb" style="left:1562px;top:233px;background:#ea6a2e;border-color:#e0b090"></div>
<svg class="i" style="left:1566px;top:237px;width:8px;height:8px;color:#8a2a05"><use href="#x"/></svg>

<div class="a" style="left:643px;top:253px;width:933px;height:32px;background:linear-gradient(#e8e8e8,#cdcdcd);border-radius:4px 4px 0 0;border:1px solid #ddd;border-bottom:0"></div>
<div class="a" style="left:644px;top:285px;width:932px;height:480px;background:#fff"></div>
<div class="tab" style="left:647px;width:122px;background:#fff;color:#555;border-color:#ccc;height:28px">Dados Gerais</div>
<div class="tab" style="left:774px;width:64px">Itens</div>
<div class="tab" style="left:842px;width:79px">Anexos</div>
<div class="tab" style="left:925px;width:91px">Histórico</div>
<div class="tab" style="left:1020px;width:196px;font-size:14.200px">Histórico Itens/Serviços</div>
<div class="tab" style="left:1220px;width:101px">Prontuário</div>

<!-- scrollbar -->
<div class="a" style="left:1557px;top:293px;width:0;height:0;border-left:7.500px solid transparent;border-right:7.500px solid transparent;border-bottom:8px solid #8e8e8e"></div>
<div class="a" style="left:1558px;top:312px;width:13px;height:375px;background:#8e8e8e;border-radius:7px"></div>

<!-- form row 1 -->
<div class="c" style="left:760px;top:300px;background:#f4a84f;border-color:#d98a30"><svg fill="#111"><use href="#med"/></svg></div>
<div class="in" style="left:800px;top:302px;width:200px;height:28px;background:#eee"></div>
<div class="v g" style="left:809px;top:307px;font-size:14px">clínico</div>
<div class="lb" style="left:998px;top:308px;width:20px;font-size:12.800px">Id:</div>
<div class="in" style="left:1027px;top:303px;width:100px;height:25px;background:#eee"></div>
<div class="v g r" style="left:1027px;top:305px;width:94px">48</div>
<div class="lb" style="left:1125px;top:308px;width:36px;font-size:12.800px">Data:</div>
<div class="in" style="left:1168px;top:303px;width:150px;height:25px"></div><div class="corner" style="left:1169px;top:304px"></div>
<div class="v" style="left:1178px;top:305px">08/08/2025 14:18</div>
<svg class="i" style="left:1320px;top:305px;width:22px;height:22px"><use href="#calc"/></svg>
<div class="lb" style="left:1338px;top:308px;width:48px;font-size:12.800px">Status:</div>
<div class="a" style="left:1396px;top:302px;width:142px;height:27px;background:#ecf5fd;border:1px solid #bcdcf3;border-radius:4px"></div>
<div class="v" style="left:1403px;top:305px;color:#1a6fb8">finalizado</div>
<svg class="i" style="left:1519px;top:312px;width:13px;height:8px" viewBox="0 0 13 8"><path d="M1 1l5.500 5.500L12 1" fill="none" stroke="#1a5ea8" stroke-width="2"/></svg>

<!-- row 2 -->
<div class="lb" style="left:680px;top:348px;width:109px">Tipo do serviço:</div>
<div class="in" style="left:799px;top:340px;width:444px;height:28px"></div>
<div class="v" style="left:808px;top:344px;font-size:14.100px">CONSULTA PLANTÃO</div>
<svg class="i" style="left:1147px;top:348px;width:12px;height:12px;color:#111"><use href="#x"/></svg>
<div class="a" style="left:1168px;top:352px;width:0;height:0;border-left:4.500px solid transparent;border-right:4.500px solid transparent;border-top:5px solid #888"></div>
<svg class="i" style="left:1193px;top:347px;width:16px;height:16px;color:#666" fill="#666"><use href="#edit"/></svg>
<svg class="i" style="left:1220px;top:346px;width:17px;height:17px" fill="#777"><use href="#search"/></svg>
<div class="lb" style="left:1250px;top:348px;width:106px">Agendar retorno:</div>
<div class="in" style="left:1361px;top:342px;width:150px;height:25px"></div>
<svg class="i" style="left:1513px;top:344px;width:22px;height:22px"><use href="#calc"/></svg>

<!-- row 3 -->
<div class="lb" style="left:680px;top:380px;width:109px">Animal:</div>
<div class="in dis" style="left:800px;top:375px;width:99px;height:25px"></div><div class="corner" style="left:801px;top:376px"></div>
<svg class="i" style="left:803px;top:380px;width:15px;height:15px"><use href="#info"/></svg>
<div class="v g r" style="left:800px;top:378px;width:95px">1</div>
<div class="a" style="left:902px;top:374px;width:35px;height:26px;background:#f2f2f2;border:1px solid #aaa;border-radius:4px"></div>
<svg class="i" style="left:911px;top:379px;width:16px;height:16px" fill="#555"><use href="#search"/></svg>
<div class="in dis" style="left:939px;top:375px;width:354px;height:25px"></div>
<div class="v g" style="left:944px;top:378px;font-size:14.300px">LUNA 5-ROGERIO MUCHAU</div>
<div class="lb" style="left:1340px;top:380px;width:70px">Pesagem:</div>
<div class="in dis" style="left:1420px;top:375px;width:99px;height:25px"></div>
<div class="v g r" style="left:1420px;top:378px;width:95px">4.0000</div>
<div class="lb" style="left:1525px;top:380px;width:15px">kg</div>

<!-- row 4 -->
<div class="lb" style="left:680px;top:414px;width:109px">Colaborador:</div>
<div class="in" style="left:800px;top:408px;width:99px;height:25px"></div><div class="corner" style="left:801px;top:409px"></div>
<svg class="i" style="left:803px;top:413px;width:15px;height:15px"><use href="#info"/></svg>
<div class="v r" style="left:800px;top:411px;width:95px">1</div>
<div class="a" style="left:902px;top:407px;width:35px;height:26px;background:linear-gradient(#f5f5f5,#d8d8d8);border:1px solid #aaa;border-radius:4px"></div>
<svg class="i" style="left:911px;top:412px;width:16px;height:16px" fill="#555"><use href="#search"/></svg>
<div class="in dis" style="left:939px;top:408px;width:231px;height:25px"></div>
<div class="v g" style="left:944px;top:411px;font-size:14.300px">TEG DEMO ZETTAPET SMART</div>
<div class="lb" style="left:1290px;top:414px;width:70px">Entrega:</div>
<div class="in" style="left:1369px;top:408px;width:149px;height:25px"></div>
<div class="v" style="left:1378px;top:411px">08/08/2025 14:48</div>
<svg class="i" style="left:1521px;top:410px;width:22px;height:22px"><use href="#calc"/></svg>

<!-- obs -->
<div class="lb" style="left:680px;top:459px;width:109px">Observações:</div>
<div class="in" style="left:799px;top:439px;width:744px;height:50px"></div>
<div class="v" style="left:803px;top:443px;font-size:13.800px">Gata Dócil</div>
<svg class="i" style="left:1530px;top:476px;width:12px;height:12px"><use href="#res"/></svg>

<!-- panel -->
<div class="a" style="left:654px;top:502px;width:889px;height:270px;border:1px solid #ccc;border-radius:5px;background:#fff"></div>
<div class="a" style="left:655px;top:540px;width:887px;height:1px;background:#e4e4e4"></div>
<div class="t" style="left:1004px;top:514px;font-weight:bold;font-size:13.200px;letter-spacing:1.200px;color:#777">DETALHES CLÍNICOS</div>
<svg class="i" style="left:1519px;top:519px;width:10px;height:6px" viewBox="0 0 10 6"><path d="M1.500 5 5 1.500 8.500 5" fill="none" stroke="#777" stroke-width="1.300"/></svg>

<div class="lb" style="left:660px;top:554px;width:135px">Risco:</div>
<div class="in" style="left:805px;top:546px;width:732px;height:28px"></div>
<div class="a" style="left:814px;top:551px;width:10px;height:20px;background:#2af598"></div>
<div class="v" style="left:829px;top:550px;font-size:14.200px">baixa</div>
<svg class="i" style="left:1441px;top:555px;width:12px;height:12px;color:#111"><use href="#x"/></svg>
<div class="a" style="left:1462px;top:559px;width:0;height:0;border-left:4.500px solid transparent;border-right:4.500px solid transparent;border-top:5px solid #888"></div>
<svg class="i" style="left:1487px;top:553px;width:16px;height:16px;color:#666" fill="#666"><use href="#edit"/></svg>
<svg class="i" style="left:1514px;top:552px;width:17px;height:17px" fill="#777"><use href="#search"/></svg>

<div class="lb" style="left:660px;top:587px;width:135px">Diagnóstico suspeito:</div>
<div class="in" style="left:805px;top:581px;width:292px;height:28px"></div>
<div class="v" style="left:814px;top:585px;font-size:14.200px">dermatite</div>
<svg class="i" style="left:1000px;top:590px;width:12px;height:12px;color:#111"><use href="#x"/></svg>
<div class="a" style="left:1022px;top:593px;width:0;height:0;border-left:4.500px solid transparent;border-right:4.500px solid transparent;border-top:5px solid #888"></div>
<svg class="i" style="left:1047px;top:588px;width:16px;height:16px;color:#666" fill="#666"><use href="#edit"/></svg>
<svg class="i" style="left:1075px;top:587px;width:17px;height:17px" fill="#777"><use href="#search"/></svg>
<div class="lb" style="left:1100px;top:587px;width:140px">Diagnóstico definitivo:</div>
<div class="in" style="left:1245px;top:579px;width:292px;height:28px"></div>
<div class="a" style="left:1492px;top:591px;width:0;height:0;border-left:4.500px solid transparent;border-right:4.500px solid transparent;border-top:5px solid #777"></div>
<svg class="i" style="left:1514px;top:586px;width:17px;height:17px" fill="#777"><use href="#search"/></svg>

<div class="lb" style="left:660px;top:634px;width:135px">Quadro clínico:</div>
<div class="in" style="left:805px;top:615px;width:732px;height:50px"></div>
<div class="v" style="left:809px;top:619px;font-size:13.800px">agitada e miando</div>
<svg class="i" style="left:1523px;top:652px;width:12px;height:12px"><use href="#res"/></svg>
<div class="lb" style="left:660px;top:692px;width:135px">Anamnese:</div>
<div class="in" style="left:805px;top:673px;width:732px;height:50px"></div>
<div class="v" style="left:809px;top:677px;font-size:13.950px">gata se coçando e lambendo as patas com frequencia</div>
<svg class="i" style="left:1523px;top:710px;width:12px;height:12px"><use href="#res"/></svg>
<div class="lb" style="left:660px;top:750px;width:135px">Exame clínico:</div>
<div class="in" style="left:805px;top:731px;width:732px;height:50px"></div>
<div class="v" style="left:809px;top:735px;font-size:13.950px">realizado esculta, analisado feridas, pesagem</div>
</body></html>
